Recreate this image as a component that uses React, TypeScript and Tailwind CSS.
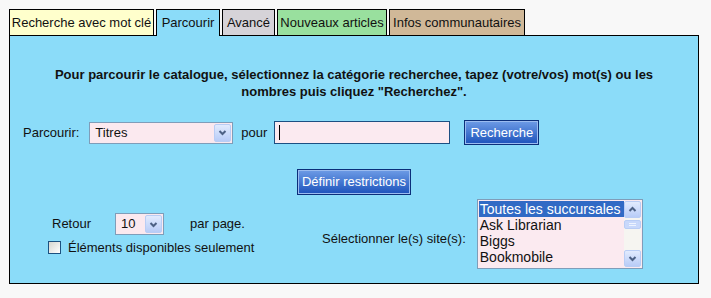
import React from 'react';

const tabs = [
  { label: 'Recherche avec mot clé', cls: 'w-[145px] bg-[#ffffcc]' },
  { label: 'Parcourir', cls: 'w-[64px] bg-[#8bdcf9] h-[27px] -mb-[1px] relative z-10', active: true },
  { label: 'Avancé', cls: 'w-[53px] bg-[#d6d3d8]' },
  { label: 'Nouveaux articles', cls: 'w-[110px] bg-[#99e09e]' },
  { label: 'Infos communautaires', cls: 'w-[136px] bg-[#d0b898]' },
];

const sites = ['Toutes les succursales', 'Ask Librarian', 'Biggs', 'Bookmobile'];

function Chevron({ up = false }: { up?: boolean }) {
  return (
    <svg width="9" height="7" viewBox="0 0 9 7">
      <path
        d={up ? 'M1.5 5 L4.5 2 L7.5 5' : 'M1.5 2 L4.5 5 L7.5 2'}
        fill="none"
        stroke="#4d6185"
        strokeWidth="2"
      />
    </svg>
  );
}

function ArrowButton({ up = false }: { up?: boolean }) {
  return (
    <div className="flex h-[17px] w-[17px] items-center justify-center rounded-[2px] border border-[#b9cdf5] bg-linear-to-b from-[#e2ebfe] to-[#b8ccf7]">
      <Chevron up={up} />
    </div>
  );
}

function FakeSelect({ value, className }: { value: string; className: string }) {
  return (
    <div className={`flex h-[22px] border border-[#7f9db9] bg-[#fbe9ef] p-[1px] ${className}`}>
      <span className="flex-1 pl-[4px] text-[13px] leading-[18px] text-[#111]">{value}</span>
      <div className="flex h-[18px] w-[17px] items-center justify-center rounded-[2px] border border-[#b9cdf5] bg-linear-to-b from-[#e2ebfe] to-[#b8ccf7]">
        <Chevron />
      </div>
    </div>
  );
}

function BlueButton({ label, className }: { label: string; className: string }) {
  return (
    <button
      type="button"
      className={`flex h-[25px] items-center justify-center border border-[#0b2f7a] bg-linear-to-b from-[#6e9ce6] to-[#1c52bb] text-[13px] text-white shadow-[inset_0_0_0_1px_#9bbcf0] ${className}`}
    >
      {label}
    </button>
  );
}

export default function App() {
  return (
    <div
      className="h-[298px] w-[711px] bg-[#f8f8f8] pl-[9px] pt-[9px] text-[#111]"
      style={{ fontFamily: '"Liberation Sans", Arial, sans-serif' }}
    >
      {/* Tabs */}
      <div className="flex h-[26px] items-start gap-[2px]">
        {tabs.map((t) => (
          <div
            key={t.label}
            className={`flex h-[26px] items-center justify-center border border-b-0 border-black text-[13px] ${t.cls}`}
          >
            {t.label}
          </div>
        ))}
      </div>

      {/* Panel */}
      <div className="h-[249px] w-[690px] border border-black bg-[#8bdcf9]">
        <p className="mt-[30px] text-center text-[13px] font-bold leading-[17px]">
          Pour parcourir le catalogue, sélectionnez la catégorie recherchee, tapez (votre/vos) mot(s) ou les
          <br />
          nombres puis cliquez "Recherchez".
        </p>

        <div className="mt-[20px] flex h-[25px] items-center pl-[13px] text-[13px]">
          <span>Parcourir:</span>
          <FakeSelect value="Titres" className="ml-[10px] w-[144px]" />
          <span className="ml-[8px]">pour</span>
          <div className="ml-[7px] flex h-[23px] w-[176px] items-center border border-[#1c4f82] bg-[#fbeaf0]">
            <span className="ml-[4px] h-[15px] w-[1px] bg-black" />
          </div>
          <BlueButton label="Recherche" className="ml-[14px] w-[75px]" />
        </div>

        <div className="mt-[24px] flex justify-center">
          <BlueButton label="Définir restrictions" className="w-[114px] h-[26px]" />
        </div>

        <div className="mt-[4px] flex items-start text-[13px]">
          <div className="w-[312px] pt-[14px]">
            <div className="flex h-[22px] items-center pl-[42px]">
              <span className="w-[63px]">Retour</span>
              <FakeSelect value="10" className="w-[49px]" />
              <span className="ml-[26px]">par page.</span>
            </div>
            <div className="mt-[3px] flex items-center pl-[38px]">
              <span className="h-[13px] w-[13px] border border-[#1c5180] bg-linear-to-br from-[#d6d6cf] to-white" />
              <span className="ml-[7px]">Éléments disponibles seulement</span>
            </div>
          </div>

          <span className="mt-[30px]">Sélectionner le(s) site(s):</span>

          <div className="ml-[11px] flex h-[70px] w-[166px] border border-[#7f9db9] bg-[#fbeaf0] p-[1px]">
            <div className="flex-1 overflow-hidden text-[14px] leading-[16px]">
              {sites.map((s, i) => (
                <div key={s} className={i === 0 ? 'bg-[#316ac5] pl-[1px] text-white' : 'pl-[1px]'}>
                  {s}
                </div>
              ))}
            </div>
            <div className="flex w-[17px] flex-col bg-[#f6f5f1]">
              <ArrowButton up />
              <div className="mt-[2px] flex h-[9px] flex-col items-center justify-center gap-[1px] rounded-[2px] border border-[#b9cdf5] bg-[#c8d8fb]">
                <span className="h-[1px] w-[7px] bg-[#eef4ff]" />
                <span className="h-[1px] w-[7px] bg-[#eef4ff]" />
              </div>
              <div className="flex-1" />
              <ArrowButton />
            </div>
          </div>
        </div>
      </div>
    </div>
  );
}
